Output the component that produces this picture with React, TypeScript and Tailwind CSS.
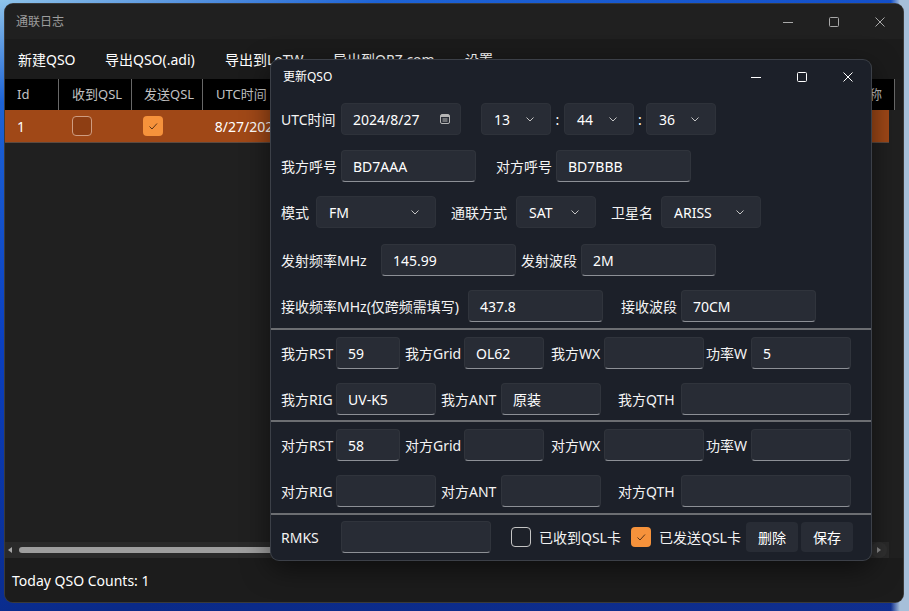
import React from 'react';

const WinControls = ({ color }: { color: string }) => (
    <div className="flex h-full">
        <div className="w-[46px] flex items-center justify-center">
            <svg width="10" height="10" viewBox="0 0 10 10">
                <path d="M0 5.5h10" stroke={color} strokeWidth="1" />
            </svg>
        </div>
        <div className="w-[46px] flex items-center justify-center">
            <svg width="10" height="10" viewBox="0 0 10 10">
                <rect x="0.5" y="0.5" width="9" height="9" rx="1" fill="none" stroke={color} strokeWidth="1" />
            </svg>
        </div>
        <div className="w-[46px] flex items-center justify-center">
            <svg width="10" height="10" viewBox="0 0 10 10">
                <path d="M0.5 0.5L9.5 9.5M9.5 0.5L0.5 9.5" stroke={color} strokeWidth="1" />
            </svg>
        </div>
    </div>
);

const Chevron = () => (
    <svg width="8" height="5" viewBox="0 0 8 5" className="shrink-0">
        <polyline points="0.5,0.5 4,4 7.5,0.5" fill="none" stroke="#c4c4c4" strokeWidth="1" />
    </svg>
);

const Label = ({ w, children, className = '' }: { w: string; children: React.ReactNode; className?: string }) => (
    <div className={`${w} ${className} shrink-0 whitespace-nowrap text-[14px] text-[#f3f3f3]`}>{children}</div>
);

const TextBox = ({ w, value = '', className = '' }: { w: string; value?: string; className?: string }) => (
    <div
        className={`${w} ${className} shrink-0 h-8 rounded-[4px] bg-[#282c35] border border-[#30343c] border-b-[#8d9096] pl-[11px] flex items-center text-[14px] text-white whitespace-nowrap`}
    >
        {value}
    </div>
);

const Combo = ({ w, value, className = '' }: { w: string; value: string; className?: string }) => (
    <div
        className={`${w} ${className} shrink-0 h-8 rounded-[4px] bg-[#282c35] border border-[#2e323a] pl-3 pr-[16px] flex items-center justify-between text-[14px] text-white`}
    >
        <span>{value}</span>
        <Chevron />
    </div>
);

const CheckBox = ({ checked }: { checked?: boolean }) =>
    checked ? (
        <div className="w-5 h-5 shrink-0 rounded-[4px] bg-[#f6923b] flex items-center justify-center">
            <svg width="20" height="20" viewBox="0 0 20 20">
                <path d="M6.5 10.5L9 13L14 7.5" fill="none" stroke="#5a3316" strokeWidth="1" />
            </svg>
        </div>
    ) : (
        <div className="w-5 h-5 shrink-0 rounded-[4px] border border-[#c4c4c4] bg-[#1d2129]" />
    );

const Row = ({ className = '', children }: { className?: string; children: React.ReactNode }) => (
    <div className={`flex items-center h-8 ${className}`}>{children}</div>
);

const Separator = ({ className = '' }: { className?: string }) => (
    <div className={`h-[2px] bg-[#6c6e72] ${className}`} />
);

export default function App() {
    return (
        <div className="relative w-[909px] h-[611px] overflow-hidden font-['Noto_Sans','Noto_Sans_CJK_SC',sans-serif] bg-[linear-gradient(90deg,transparent_98%,#a6bfd9_99%),linear-gradient(165deg,#8fc4ea_0%,#1d63d6_12%,#0b40c0_40%,#0a2a88_75%,#102f8f_100%)]">
            {/* main window */}
            <div className="absolute left-[5px] top-[4px] w-[898px] h-[598px] rounded-lg overflow-hidden ring-1 ring-[#3a3a3a] flex flex-col bg-[#202020]">
                <div className="h-[35px] bg-[#202020] flex items-center justify-between shrink-0">
                    <span className="pl-[11px] text-[12px] text-[#9d9d9d]">通联日志</span>
                    <WinControls color="#a9a9a9" />
                </div>

                <div className="h-[40px] bg-[#1b1b1b] flex items-center pl-[13px] text-[14px] text-white shrink-0">
                    <span className="w-[87px] whitespace-nowrap">新建QSO</span>
                    <span className="w-[120px] whitespace-nowrap">导出QSO(.adi)</span>
                    <span className="w-[108px] whitespace-nowrap">导出到LoTW</span>
                    <span className="w-[132px] whitespace-nowrap">导出到QRZ.com</span>
                    <span className="whitespace-nowrap">设置</span>
                </div>

                {/* table header */}
                <div className="h-[31px] bg-black flex text-[13px] text-[#c2c2c2] shrink-0">
                    <div className="w-[54px] pl-3 border-r border-[#686868] flex items-center">Id</div>
                    <div className="w-[73px] pl-[13px] border-r border-[#686868] flex items-center">收到QSL</div>
                    <div className="w-[71px] pl-3 border-r border-[#686868] flex items-center">发送QSL</div>
                    <div className="w-[160px] pl-[13px] border-r border-[#686868] flex items-center">UTC时间</div>
                    <div className="w-[120px] border-r border-[#686868]" />
                    <div className="w-[120px] border-r border-[#686868]" />
                    <div className="w-[110px] border-r border-[#686868]" />
                    <div className="w-[105px] border-r border-[#686868]" />
                    <div className="w-[77px] pl-3 border-r border-[#686868] flex items-center whitespace-nowrap">卫星名称</div>
                    <div className="flex-1 bg-[#1c1c1c]" />
                </div>

                {/* selected row */}
                <div className="h-[33px] w-[884px] bg-[#a04817] border-b border-[#5c4a40] flex items-center text-[14px] text-white shrink-0">
                    <div className="w-[54px] pl-3">1</div>
                    <div className="w-[73px] pl-[13px]">
                        <div className="w-5 h-5 rounded-[4px] border border-[#cf9c80] bg-[#8e3e13]" />
                    </div>
                    <div className="w-[71px] pl-3">
                        <CheckBox checked />
                    </div>
                    <div className="w-[160px] pl-[13px] whitespace-nowrap">8/27/202</div>
                    <div className="w-[120px]" />
                    <div className="w-[120px]" />
                    <div className="w-[110px]" />
                    <div className="w-[105px]" />
                    <div className="w-[77px] pl-3">ARISS</div>
                </div>

                <div className="flex-1" />

                {/* horizontal scrollbar */}
                <div className="h-[16px] w-[884px] bg-[#2a2a2a] flex items-center shrink-0">
                    <svg width="14" height="16" viewBox="0 0 14 16" className="shrink-0">
                        <polygon points="3,8 7,5 7,11" fill="#a6a6a6" />
                    </svg>
                    <div className="w-[620px] h-[6px] rounded-full bg-[#9e9e9e]" />
                    <div className="flex-1" />
                    <div className="w-[16px] h-[16px] mr-[2px] rounded-full bg-[#303030] flex items-center justify-center">
                        <svg width="8" height="10" viewBox="0 0 8 10">
                            <polygon points="6,5 2,2 2,8" fill="#8a8a8a" />
                        </svg>
                    </div>
                </div>

                <div className="h-[44px] bg-[#1c1c1c] flex items-center pl-[7px] text-[14px] text-white shrink-0">
                    Today QSO Counts: 1
                </div>
            </div>

            {/* update dialog */}
            <div className="absolute left-[271px] top-[60px] w-[600px] h-[500px] rounded-lg ring-1 ring-[#3c4048] bg-[#1c2029] shadow-[0_8px_28px_rgba(0,0,0,0.55)] flex flex-col overflow-hidden">
                <div className="h-[34px] flex items-center justify-between shrink-0">
                    <span className="pl-3 text-[12px] text-white">更新QSO</span>
                    <WinControls color="#ffffff" />
                </div>

                <div className="pt-[9px] flex flex-col">
                    <Row className="pl-[10px]">
                        <Label w="w-[60px]">UTC时间</Label>
                        <div className="w-[120px] h-8 rounded-[4px] bg-[#282c35] border border-[#2e323a] pl-[11px] pr-[10px] flex items-center justify-between text-[14px] text-white">
                            <span>2024/8/27</span>
                            <svg width="10" height="10" viewBox="0 0 10 10">
                                <rect x="0.5" y="0.5" width="9" height="9" rx="1.5" fill="none" stroke="#b5b5b5" strokeWidth="1" />
                                <rect x="1" y="1" width="8" height="2" fill="#b5b5b5" />
                                <rect x="2.5" y="4.5" width="5" height="1" fill="#b5b5b5" />
                                <rect x="2.5" y="6.5" width="5" height="1" fill="#b5b5b5" />
                            </svg>
                        </div>
                        <Combo w="w-[70px]" value="13" className="ml-[20px]" />
                        <span className="w-[13px] text-center text-[14px] text-white">:</span>
                        <Combo w="w-[70px]" value="44" />
                        <span className="w-[12px] text-center text-[14px] text-white">:</span>
                        <Combo w="w-[70px]" value="36" />
                    </Row>

                    <Row className="pl-[10px] mt-[15px]">
                        <Label w="w-[60px]">我方呼号</Label>
                        <TextBox w="w-[135px]" value="BD7AAA" />
                        <Label w="w-[60px]" className="ml-[20px]">对方呼号</Label>
                        <TextBox w="w-[135px]" value="BD7BBB" />
                    </Row>

                    <Row className="pl-[10px] mt-[14px]">
                        <Label w="w-[35px]">模式</Label>
                        <Combo w="w-[120px]" value="FM" />
                        <Label w="w-[65px]" className="ml-[15px]">通联方式</Label>
                        <Combo w="w-[80px]" value="SAT" />
                        <Label w="w-[50px]" className="ml-[15px]">卫星名</Label>
                        <Combo w="w-[100px]" value="ARISS" />
                    </Row>

                    <Row className="pl-[10px] mt-[16px]">
                        <Label w="w-[100px]">发射频率MHz</Label>
                        <TextBox w="w-[135px]" value="145.99" />
                        <Label w="w-[60px]" className="ml-[5px]">发射波段</Label>
                        <TextBox w="w-[135px]" value="2M" />
                    </Row>

                    <Row className="pl-[10px] mt-[14px]">
                        <Label w="w-[187px]">接收频率MHz(仅跨频需填写)</Label>
                        <TextBox w="w-[135px]" value="437.8" />
                        <Label w="w-[60px]" className="ml-[18px]">接收波段</Label>
                        <TextBox w="w-[135px]" value="70CM" />
                    </Row>

                    <Separator className="mt-[6px]" />

                    <Row className="pl-[10px] mt-[7px]">
                        <Label w="w-[55px]">我方RST</Label>
                        <TextBox w="w-[64px]" value="59" />
                        <Label w="w-[59px]" className="ml-[5px]">我方Grid</Label>
                        <TextBox w="w-[80px]" value="OL62" />
                        <Label w="w-[53px]" className="ml-[7px]">我方WX</Label>
                        <TextBox w="w-[100px]" />
                        <Label w="w-[45px]" className="ml-[2px]">功率W</Label>
                        <TextBox w="w-[100px]" value="5" />
                    </Row>

                    <Row className="pl-[10px] mt-[14px]">
                        <Label w="w-[55px]">我方RIG</Label>
                        <TextBox w="w-[100px]" value="UV-K5" />
                        <Label w="w-[60px]" className="ml-[5px]">我方ANT</Label>
                        <TextBox w="w-[100px]" value="原装" />
                        <Label w="w-[63px]" className="ml-[17px]">我方QTH</Label>
                        <TextBox w="w-[170px]" />
                    </Row>

                    <Separator className="mt-[5px]" />

                    <Row className="pl-[10px] mt-[7px]">
                        <Label w="w-[55px]">对方RST</Label>
                        <TextBox w="w-[64px]" value="58" />
                        <Label w="w-[59px]" className="ml-[5px]">对方Grid</Label>
                        <TextBox w="w-[80px]" />
                        <Label w="w-[53px]" className="ml-[7px]">对方WX</Label>
                        <TextBox w="w-[100px]" />
                        <Label w="w-[45px]" className="ml-[2px]">功率W</Label>
                        <TextBox w="w-[100px]" />
                    </Row>

                    <Row className="pl-[10px] mt-[14px]">
                        <Label w="w-[55px]">对方RIG</Label>
                        <TextBox w="w-[100px]" />
                        <Label w="w-[60px]" className="ml-[5px]">对方ANT</Label>
                        <TextBox w="w-[100px]" />
                        <Label w="w-[63px]" className="ml-[17px]">对方QTH</Label>
                        <TextBox w="w-[170px]" />
                    </Row>

                    <Separator className="mt-[6px]" />

                    <Row className="pl-[10px] mt-[6px]">
                        <Label w="w-[60px]">RMKS</Label>
                        <TextBox w="w-[150px]" />
                        <div className="ml-[20px]">
                            <CheckBox />
                        </div>
                        <Label w="w-[92px]" className="ml-[8px]">已收到QSL卡</Label>
                        <CheckBox checked />
                        <Label w="w-[87px]" className="ml-[8px]">已发送QSL卡</Label>
                        <div className="w-[52px] h-[30px] rounded-[4px] bg-[#282c35] flex items-center justify-center text-[14px] text-white">
                            删除
                        </div>
                        <div className="ml-[3px] w-[52px] h-[30px] rounded-[4px] bg-[#282c35] flex items-center justify-center text-[14px] text-white">
                            保存
                        </div>
                    </Row>
                </div>
            </div>
        </div>
    );
}
